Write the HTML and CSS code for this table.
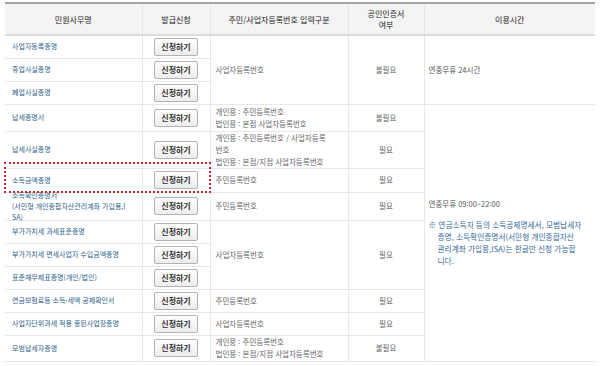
FILE: index.html
```html
<!DOCTYPE html>
<html lang="ko">
<head>
<meta charset="utf-8">
<title>민원사무 발급신청</title>
<link rel="stylesheet" href="styles.css">
</head>
<body>
<div class="wrap">
<table class="tbl">
  <colgroup>
    <col class="c1"><col class="c2"><col class="c3"><col class="c4"><col class="c5">
  </colgroup>
  <thead>
    <tr class="hrow">
      <th>민원사무명</th>
      <th>발급신청</th>
      <th>주민/사업자등록번호 입력구분</th>
      <th>공인인증서<br>여부</th>
      <th>이용시간</th>
    </tr>
  </thead>
  <tbody>
    <tr class="h23">
      <td class="name">사업자등록증명</td>
      <td class="act"><button class="btn">신청하기</button></td>
      <td class="idt" rowspan="3">사업자등록번호</td>
      <td class="cert" rowspan="3">불필요</td>
      <td class="time" rowspan="3">연중무휴 24시간</td>
    </tr>
    <tr class="h23">
      <td class="name">휴업사실증명</td>
      <td class="act"><button class="btn">신청하기</button></td>
    </tr>
    <tr class="h23">
      <td class="name">폐업사실증명</td>
      <td class="act"><button class="btn">신청하기</button></td>
    </tr>
    <tr class="h27">
      <td class="name">납세증명서</td>
      <td class="act"><button class="btn">신청하기</button></td>
      <td class="idt">개인용 : 주민등록번호<br>법인용 : 본점 사업자등록번호</td>
      <td class="cert">불필요</td>
      <td class="time" rowspan="10">
        <p class="hours">연중무휴 09:00~22:00</p>
        <p class="note">※ 연금소득자 등의 소득공제명세서, 모범납세자<br>증명, 소득확인증명서(서민형 개인종합자산<br>관리계좌 가입용,ISA)는 한글만 신청 가능합<br>니다.</p>
      </td>
    </tr>
    <tr class="h37">
      <td class="name">납세사실증명</td>
      <td class="act"><button class="btn">신청하기</button></td>
      <td class="idt">개인용 : 주민등록번호 / 사업자등록<br>번호<br>법인용 : 본점/지점 사업자등록번호</td>
      <td class="cert">필요</td>
    </tr>
    <tr class="h24">
      <td class="name">소득금액증명</td>
      <td class="act"><button class="btn">신청하기</button></td>
      <td class="idt">주민등록번호</td>
      <td class="cert">필요</td>
    </tr>
    <tr class="h28">
      <td class="name"><div class="squeeze">소득확인증명서<br>(서민형 개인종합자산관리계좌 가입용,I<br>SA)</div></td>
      <td class="act"><button class="btn">신청하기</button></td>
      <td class="idt">주민등록번호</td>
      <td class="cert">필요</td>
    </tr>
    <tr class="h23">
      <td class="name">부가가치세 과세표준증명</td>
      <td class="act"><button class="btn">신청하기</button></td>
      <td class="idt" rowspan="3">사업자등록번호</td>
      <td class="cert" rowspan="3">필요</td>
    </tr>
    <tr class="h23">
      <td class="name">부가가치세 면세사업자 수입금액증명</td>
      <td class="act"><button class="btn">신청하기</button></td>
    </tr>
    <tr class="h23">
      <td class="name">표준재무제표증명(개인/법인)</td>
      <td class="act"><button class="btn">신청하기</button></td>
    </tr>
    <tr class="h23">
      <td class="name">연금보험료등 소득·세액 공제확인서</td>
      <td class="act"><button class="btn">신청하기</button></td>
      <td class="idt">주민등록번호</td>
      <td class="cert">필요</td>
    </tr>
    <tr class="h23">
      <td class="name">사업자단위과세 적용 종된사업장증명</td>
      <td class="act"><button class="btn">신청하기</button></td>
      <td class="idt">사업자등록번호</td>
      <td class="cert">필요</td>
    </tr>
    <tr class="h26">
      <td class="name">모범납세자증명</td>
      <td class="act"><button class="btn">신청하기</button></td>
      <td class="idt">개인용 : 주민등록번호<br>법인용 : 본점/지점 사업자등록번호</td>
      <td class="cert">불필요</td>
    </tr>
  </tbody>
</table>
<div class="highlight"></div>
</div>
</body>
</html>
```
FILE: styles.css
```css
* { box-sizing: border-box; }
html, body { margin: 0; padding: 0; background: #fff; }
body {
  font-family: "Noto Sans CJK KR", "Noto Sans", "DejaVu Sans", sans-serif;
  color: #555;
}
.wrap {
  position: relative;
  padding: 2px 5px 0 5px;
  width: 600px;
}
.tbl {
  width: 590px;
  table-layout: fixed;
  border-collapse: collapse;
  border-top: 2px solid #a3a3a3;
  border-bottom: 1px solid #e4e4e4;
}
.c1 { width: 137px; }
.c2 { width: 68px; }
.c3 { width: 138px; }
.c4 { width: 76px; }
.c5 { width: 171px; }

.hrow { height: 32px; }
.tbl th {
  background: #f4f4f4;
  border-bottom: 2px solid #dcdcdc;
  border-left: 1px solid #e6e6e6;
  font-size: 8px;
  line-height: 11px;
  font-weight: normal;
  color: #222;
  padding: 0;
  text-align: center;
  vertical-align: middle;
}
.tbl th:first-child { border-left: none; }

.tbl td {
  border-top: 1px solid #e8e8e8;
  border-left: 1px solid #e8e8e8;
  padding: 0;
  vertical-align: middle;
  font-size: 7.5px;
  line-height: 12px;
}
.tbl td.name { border-left: none; }

.h23 { height: 23px; }
.h24 { height: 24px; }
.h26 { height: 26px; }
.h27 { height: 27px; }
.h28 { height: 28px; }
.h37 { height: 37px; }

.name {
  padding-left: 7px !important;
  color: #2b6089;
  font-size: 7px !important;
  line-height: 11px !important;
  white-space: nowrap;
}
.squeeze {
  height: 26px;
  display: flex;
  flex-direction: column;
  justify-content: center;
}
.act { text-align: center; }
.btn {
  display: inline-block;
  width: 44px;
  height: 18px;
  margin: 0;
  padding: 0;
  border: 1px solid #b4b4b4;
  border-radius: 2px;
  background: linear-gradient(#ffffff, #ededed);
  font-family: inherit;
  font-size: 8px;
  font-weight: bold;
  line-height: 16px;
  color: #333;
  vertical-align: middle;
}
.idt {
  padding-left: 5px !important;
  color: #666;
  white-space: nowrap;
}
.cert {
  text-align: center;
  color: #666;
}
.time {
  padding-left: 4px !important;
  color: #555;
}
.hours { margin: 0 0 9px 0; }
.note {
  margin: 0;
  padding-left: 9px;
  text-indent: -9px;
  font-size: 7.7px;
  color: #336b98;
}
.highlight {
  position: absolute;
  left: 4px;
  top: 162px;
  width: 207px;
  height: 31px;
  border: 2px dotted #d0262b;
  pointer-events: none;
}
```
